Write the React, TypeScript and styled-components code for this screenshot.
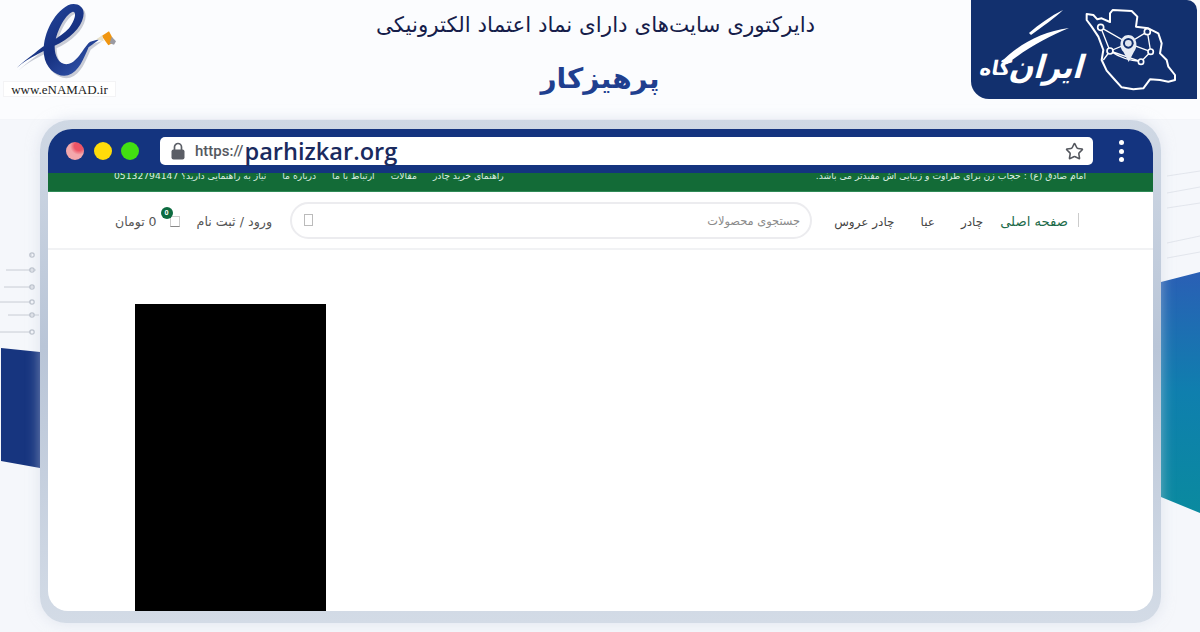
import React from "react";
import styled, { createGlobalStyle } from "styled-components";
import { Star } from "lucide-react";

const Global = createGlobalStyle`
  html, body { margin: 0; padding: 0; background: #f5f7fb; }
  * { box-sizing: border-box; }
`;
const FA = `"DejaVu Sans", "Noto Sans", sans-serif`;

const Page = styled.div`
  position: relative; width: 1200px; height: 632px; overflow: hidden;
  background: #f5f7fb; font-family: ${FA};
`;
const Backdrop = styled.svg`
  position: absolute; inset: 0; width: 1200px; height: 632px;
`;
const Header = styled.header`
  position: relative; display: grid; grid-template-columns: 229px 1fr 229px;
  height: 120px; background: #fbfcfe; border-bottom: 1px solid #f3f5f9;
`;
const Badge = styled.div`
  display: flex; flex-direction: column; align-items: flex-start; padding-left: 3px;
`;
const BadgeCaption = styled.div`
  width: 113px; height: 16px; margin-top: -1px; background: #fff; border: 1px solid #f3f3f5;
  font: 13px/15px "Liberation Serif", serif; color: #222; text-align: center; white-space: nowrap;
`;
const Titles = styled.div`
  display: flex; flex-direction: column; align-items: center; padding-top: 9px;
`;
const Title = styled.h1`
  margin: 0 9px 0 0; font-weight: 400; font-size: 21.4px; line-height: 32px; color: #161d4a; direction: rtl;
`;
const SiteName = styled.h2`
  margin: 18px 0 0; font-weight: 700; font-size: 28px; line-height: 40px; color: #1f3f8f; direction: rtl;
`;
const Brand = styled.div`
  display: flex; align-items: center; justify-content: flex-end; position: relative;
  width: 226px; height: 99px; padding-right: 7px; background: #12306e;
  border-radius: 0 10px 0 18px;
`;
const BrandWord = styled.div`
  position: absolute; left: 44px; top: 47px; width: 70px; text-align: center;
  color: #fff; font: 700 29px/40px ${FA}; direction: rtl; white-space: nowrap;
  transform: skewX(-16deg) scaleY(1.1);
`;
const BrandSuffix = styled.div`
  position: absolute; left: 9px; top: 55px; color: #fff; font: 700 20px/26px ${FA};
  direction: rtl; white-space: nowrap; transform: skewX(-10deg);
`;
const Flourish = styled.svg`
  position: absolute; left: 0; top: 0;
`;
const Frame = styled.main`
  position: relative; margin: 0 39px 0 40px; height: 503px; padding: 9px 8px 11px 8px;
  background: linear-gradient(180deg, #cfd8e4 0%, #b9c5d7 45%, #d3dbe6 100%);
  border-radius: 30px 30px 26px 26px;
  box-shadow: 0 0 14px rgba(205, 214, 228, 0.55);
`;
const Screen = styled.div`
  display: flex; flex-direction: column; height: 482px; background: #fff;
  border-radius: 24px 24px 20px 20px; overflow: hidden;
`;
const TopBar = styled.div`
  display: flex; align-items: center; height: 44px; flex: none; padding: 0 25px 0 18px; background: #14347f;
`;
const Lights = styled.div`
  display: flex; gap: 9.5px; margin-right: 21px;
`;
const Light = styled.span<{ $c: string }>`
  display: block; width: 18px; height: 18px; border-radius: 50%; background: ${(p) => p.$c};
`;
const Address = styled.div`
  display: flex; align-items: center; width: 933px; height: 28px; padding: 0 9px 0 11px;
  background: #fff; border-radius: 5px;
`;
const Scheme = styled.span`
  margin-left: 10px; font: 500 15px/28px Roboto, sans-serif; color: #55585f;
`;
const Host = styled.span`
  font: 600 23.6px/28px "Open Sans", sans-serif; color: #1a2a5e; margin-left: 1px;
`;
const Spacer = styled.span`flex: 1;`;
const Kebab = styled.div`
  display: flex; flex-direction: column; gap: 3.5px; margin-left: 26px;
`;
const Dot = styled.span`
  display: block; width: 5px; height: 5px; border-radius: 50%; background: #fff;
`;
const Strip = styled.div`
  display: flex; justify-content: space-between; flex: none; height: 19px; padding: 0 67px 0 66px;
  background: #136b37; border-bottom: 1px solid #2f8a57; overflow: hidden;
`;
const StripLinks = styled.div`
  display: flex; gap: 16px; margin-top: -4px; direction: ltr;
`;
const StripText = styled.span`
  font-size: 9.2px; line-height: 14px; color: #dcefe4; direction: rtl; white-space: nowrap;
`;
const NavRow = styled.div`
  display: flex; align-items: center; flex: none; height: 58px; padding: 0 74px 0 67px;
  border-bottom: 2px solid #f1f2f4;
`;
const Price = styled.span`
  margin-top: 3px; font-size: 12.5px; color: #555; direction: rtl; white-space: nowrap;
`;
const Cart = styled.span`
  position: relative; display: block; flex: none; width: 10px; height: 11px; margin: 3px 17px 0 13px;
  border: 1px solid #ccc; border-bottom-color: #888;
`;
const CartCount = styled.span`
  position: absolute; left: -10px; top: -10px; width: 12px; height: 12px; border-radius: 50%;
  background: #0d6b40; color: #fff; font: 700 7px/12px Roboto, sans-serif; text-align: center;
`;
const Login = styled.span`
  margin-top: 3px; font-size: 12.7px; color: #555; direction: rtl; white-space: nowrap;
`;
const Search = styled.div`
  display: flex; align-items: center; justify-content: space-between; flex: none; width: 522px; height: 37px;
  margin: 0 20px 0 18px; padding: 0 10px 0 12px; border: 2px solid #ececef; border-radius: 19px;
`;
const SearchGlyph = styled.span`
  display: block; flex: none; width: 9px; height: 12px; border: 1px solid #bbb;
`;
const Placeholder = styled.span`
  margin-top: 2px; font-size: 11.4px; color: #8a8a8a; direction: rtl;
`;
const Nav = styled.nav`
  display: flex; align-items: center; gap: 26px; flex: 1; justify-content: flex-end;
`;
const NavLink = styled.a<{ $active?: boolean }>`
  margin-top: 3px; margin-left: ${(p) => (p.$active ? "-9px" : "0")};
  font-size: ${(p) => (p.$active ? "13.2px" : "12px")};
  color: ${(p) => (p.$active ? "#1d6b4a" : "#444")}; direction: rtl; white-space: nowrap;
`;
const NavEdge = styled.span`
  display: block; flex: none; width: 1px; height: 14px; margin-left: -16px; background: #ccc;
`;
const Content = styled.div`
  flex: 1; padding: 54px 0 0 87px; overflow: hidden;
`;
const Poster = styled.div`
  width: 191px; height: 320px; background: #000;
`;

const E_PATH =
  "M40 205C80 170 130 150 170 130C215 105 242 70 242 40C242 15 215 6 195 16C150 40 116 110 123 165C128 208 165 234 195 226C228 216 242 175 257 142L292 116L262 125C245 135 225 187 195 192C170 196 155 170 155 140C157 100 185 45 208 36C222 32 218 60 198 85C175 112 120 135 95 160C75 175 55 190 40 205Z";

const Enamad = () => (
  <svg width="114" height="82" viewBox="0 0 342 246">
    <defs>
      <linearGradient id="eg" x1="0" y1="0" x2="1" y2="1">
        <stop offset="0" stopColor="#2a4fa8" />
        <stop offset=".55" stopColor="#16307f" />
        <stop offset="1" stopColor="#3a5fb8" />
      </linearGradient>
    </defs>
    <path transform="translate(6 7)" fill="#c9ccd6" d={E_PATH} />
    <path fill="url(#eg)" d={E_PATH} />
    <path d="M296 108L318 94L335 126L316 136Z" fill="#f0950f" />
    <path d="M326 110L339 124L333 134L320 130Z" fill="#9a9aa2" />
    <path d="M280 118L298 106L302 124Z" fill="#e8e0c8" />
  </svg>
);

const IranMap = () => (
  <svg width="130" height="99" viewBox="0 0 390 297" fill="none" stroke="#fff">
    <path
      strokeWidth="6"
      strokeLinejoin="round"
      d="M80 42L100 45L112 58L125 55L150 66L150 40L158 30L215 33L232 50L228 80L265 85L295 100L305 130L300 160L320 180L325 200L345 225L345 240L325 245L300 240L270 238L250 265L220 268L185 262L165 240L140 212L125 180L130 150L115 110L95 80L80 60Z"
    />
    <path
      strokeWidth="4"
      d="M122 82L150 153L243 185L272 155L262 95L205 130L122 82M150 153L205 130M272 155L205 130M150 153L130 180M150 153Q190 180 243 185"
    />
    <g fill="#12306e" strokeWidth="5">
      <circle cx="122" cy="82" r="9" />
      <circle cx="262" cy="95" r="9" />
      <circle cx="150" cy="153" r="9" />
      <circle cx="272" cy="155" r="8" />
      <circle cx="243" cy="185" r="8" />
    </g>
    <path d="M205 105C180 105 175 140 190 155L206 186L222 155C236 140 230 105 205 105Z" fill="#e8edf5" stroke="none" />
    <circle cx="205" cy="130" r="16" fill="#12306e" stroke="none" />
    <circle cx="205" cy="130" r="10" fill="#dfe5ef" stroke="none" />
  </svg>
);

const Lock = () => (
  <svg width="14" height="18" viewBox="0 0 14 18">
    <path d="M3.5 8V5a3.5 3.5 0 0 1 7 0v3" fill="none" stroke="#5b5e66" strokeWidth="1.7" />
    <rect x="0.5" y="7.5" width="13" height="10" rx="2" fill="#5b5e66" />
  </svg>
);

const nodes = [
  [32, 255, 0], [6, 270, 32], [4, 287, 32], [0, 302, 33], [8, 315, 33], [0, 332, 33],
];

const App = () => (
  <Page>
    <Global />
    <Backdrop viewBox="0 0 1200 632">
      <defs>
        <linearGradient id="rb" x1="0" y1="0" x2="0" y2="1">
          <stop offset="0" stopColor="#2a5fb5" />
          <stop offset=".5" stopColor="#0f7fae" />
          <stop offset="1" stopColor="#0a8a9f" />
        </linearGradient>
      </defs>
      <path d="M1 348L40 352V468L1 461Z" fill="#17357f" />
      <path d="M1161 282L1200 272V513L1161 497Z" fill="url(#rb)" />
      {nodes.map(([x, y, len], i) => (
        <g key={i} stroke="#bcc2cc" fill="none">
          <line x1={x} y1={y} x2={x + len - 2} y2={y} strokeWidth=".8" />
          <circle cx={32} cy={y} r="2.2" strokeWidth="1.2" />
        </g>
      ))}
      <g stroke="#dde1e8" fill="none" strokeWidth=".8">
        <path d="M1167 176L1200 171M1167 193L1200 187M1167 208L1200 203M1167 243L1200 236M1167 258L1200 252" />
      </g>
    </Backdrop>
    <Header>
      <Badge>
        <Enamad />
        <BadgeCaption>www.eNAMAD.ir</BadgeCaption>
      </Badge>
      <Titles>
        <Title>دایرکتوری سایت‌های دارای نماد اعتماد الکترونیکی</Title>
        <SiteName>پرهیزکار</SiteName>
      </Titles>
      <Brand>
        <Flourish width="114" height="70" viewBox="0 0 114 70">
          <path d="M30 62C48 44 70 32 98 28C78 36 56 48 36 64Z" fill="#fff" />
          <path d="M58 33C68 24 80 16 92 10C84 18 72 26 60 35Z" fill="#fff" />
        </Flourish>
        <BrandWord>ایران</BrandWord>
        <BrandSuffix>گاه</BrandSuffix>
        <IranMap />
      </Brand>
    </Header>
    <Frame>
      <Screen>
        <TopBar>
          <Lights>
            <Light $c="radial-gradient(circle at 72% 22%, #ee5566 0 24%, #f3a8ac 46%)" />
            <Light $c="#ffdc0a" />
            <Light $c="#42e012" />
          </Lights>
          <Address>
            <Lock />
            <Scheme>https://</Scheme>
            <Host>parhizkar.org</Host>
            <Spacer />
            <Star size={19} color="#55585f" strokeWidth={2} />
          </Address>
          <Kebab>
            <Dot />
            <Dot />
            <Dot />
          </Kebab>
        </TopBar>
        <Strip>
          <StripLinks>
            <StripText>نیاز به راهنمایی دارید؟ 05132794147</StripText>
            <StripText>درباره ما</StripText>
            <StripText>ارتباط با ما</StripText>
            <StripText>مقالات</StripText>
            <StripText>راهنمای خرید چادر</StripText>
          </StripLinks>
          <StripLinks>
            <StripText>امام صادق (ع) : حجاب زن برای طراوت و زیبایی اش مفیدتر می باشد.</StripText>
          </StripLinks>
        </Strip>
        <NavRow>
          <Price>0 تومان</Price>
          <Cart>
            <CartCount>0</CartCount>
          </Cart>
          <Login>ورود / ثبت نام</Login>
          <Search>
            <SearchGlyph />
            <Placeholder>جستجوی محصولات</Placeholder>
          </Search>
          <Nav>
            <NavLink>چادر عروس</NavLink>
            <NavLink>عبا</NavLink>
            <NavLink>چادر</NavLink>
            <NavLink $active>صفحه اصلی</NavLink>
            <NavEdge />
          </Nav>
        </NavRow>
        <Content>
          <Poster />
        </Content>
      </Screen>
    </Frame>
  </Page>
);

export default App;
